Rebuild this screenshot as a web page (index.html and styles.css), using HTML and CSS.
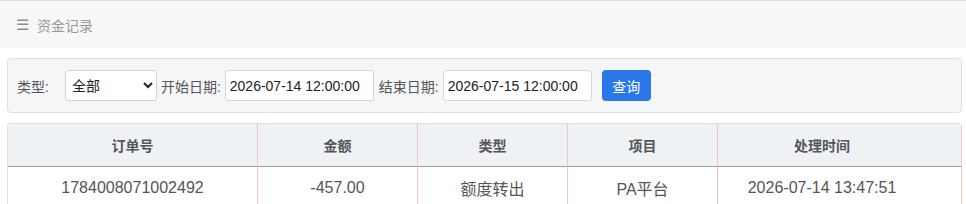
FILE: index.html
```html
<!DOCTYPE html>
<html lang="zh-CN">
<head>
  <meta charset="UTF-8">
  <meta name="viewport" content="width=device-width, initial-scale=1">
  <title>资金记录</title>
  <link rel="stylesheet" href="styles.css">
</head>
<body>

  <!-- 顶部标题 -->
  <div class="page-header">
    <span class="menu-icon">☰</span>
    <span class="page-title">资金记录</span>
  </div>

  <div class="main">
    <!-- 筛选条件 -->
    <form class="filter-bar" onsubmit="return false">
      <label class="filter-label first">类型:</label>
      <select class="filter-select">
        <option>全部</option>
        <option>额度转入</option>
        <option>额度转出</option>
      </select>
      <label class="filter-label">开始日期:</label>
      <input class="filter-input" type="text" value="2026-07-14 12:00:00">
      <label class="filter-label">结束日期:</label>
      <input class="filter-input" type="text" value="2026-07-15 12:00:00">
      <button class="search-btn" type="submit">查询</button>
    </form>

    <!-- 记录表格 -->
    <table class="record-table">
      <colgroup>
        <col style="width: 249px">
        <col style="width: 160px">
        <col style="width: 150px">
        <col style="width: 150px">
        <col>
      </colgroup>
      <thead>
        <tr>
          <th>订单号</th>
          <th>金额</th>
          <th>类型</th>
          <th>项目</th>
          <th>处理时间</th>
        </tr>
      </thead>
      <tbody>
        <tr>
          <td>1784008071002492</td>
          <td>-457.00</td>
          <td>额度转出</td>
          <td>PA平台</td>
          <td>2026-07-14 13:47:51</td>
        </tr>
      </tbody>
    </table>
  </div>

</body>
</html>
```

FILE: styles.css
```css
/* 基本设置 */
body {
  margin: 0;
  font-family: "Liberation Sans", "Noto Sans CJK SC", sans-serif;
  background: #fff;
  color: #555;
}

/* 顶部标题 */
.page-header {
  height: 47px;
  border-top: 1px solid #dedfe1;
  background-color: #f6f7f9;
  display: flex;
  align-items: center;
  padding-left: 16px;
  color: #999;
  font-size: 14px;
}

.menu-icon {
  font-size: 15px;
  margin-right: 8px;
  color: #8f8f8f;
}

.main {
  padding: 10px 4px 0 7px;
}

/* 筛选条件 */
.filter-bar {
  display: flex;
  align-items: center;
  height: 53px;
  padding: 0 9px;
  border: 1px solid #dcdfe3;
  border-radius: 4px;
  background-color: #f5f6f8;
  margin: 0;
}

.filter-label {
  font-size: 14px;
  color: #555;
  margin-right: 4px;
}

.filter-label.first {
  margin-right: 16px;
}

.filter-select {
  width: 92px;
  height: 31px;
  border: 1px solid #cfd2d6;
  border-radius: 3px;
  background: #fff;
  font-family: inherit;
  font-size: 14px;
  color: #222;
  padding: 0 2px;
  margin-right: 4px;
}

.filter-input {
  width: 149px;
  height: 31px;
  box-sizing: border-box;
  border: 1px solid #d4d7db;
  border-radius: 3px;
  background: #fff;
  font-family: inherit;
  font-size: 14px;
  color: #222;
  padding: 0 4px;
  margin-right: 5px;
}

.search-btn {
  margin-left: 5px;
  width: 49px;
  height: 31px;
  border: none;
  border-radius: 4px;
  background-color: #2a77ea;
  color: #fff;
  font-family: inherit;
  font-size: 14px;
  cursor: pointer;
}

/* 记录表格 */
.record-table {
  width: 100%;
  margin-top: 10px;
  border-collapse: separate;
  border-spacing: 0;
  table-layout: fixed;
  border: 1px solid #dcdfe3;
  border-right-color: #f3c6c6;
  border-radius: 4px 4px 0 0;
}

.record-table th {
  height: 40px;
  background-color: #eff2f5;
  font-size: 14px;
  font-weight: bold;
  color: #555;
  border-bottom: 1px solid #a19d9d;
  border-left: 1px solid #f3c6c6;
}

.record-table td {
  height: 40px;
  text-align: center;
  font-size: 16px;
  color: #555;
  border-left: 1px solid #f3c6c6;
}

.record-table th:first-child,
.record-table td:first-child {
  border-left: none;
}

/* 最后一列文字略偏左 */
.record-table th:last-child,
.record-table td:last-child {
  padding-right: 36px;
}
```
